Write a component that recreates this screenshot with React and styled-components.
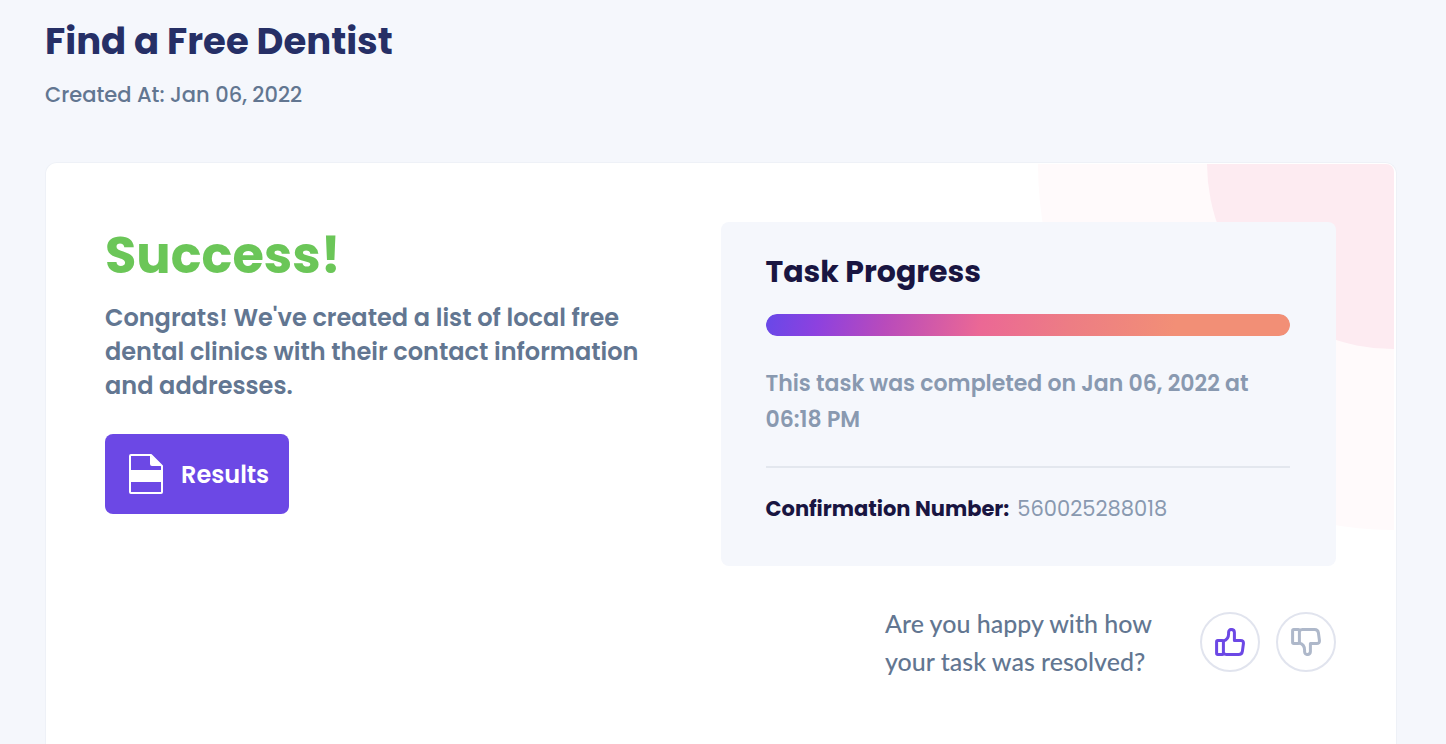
import { useState } from 'react'
import styled, { createGlobalStyle } from 'styled-components'

// styles
const GlobalStyle = createGlobalStyle`
  * {
    box-sizing: border-box;
  }
  body {
    margin: 0;
    background: #f5f7fc;
    font-family: Poppins, Inter, sans-serif;
    color: #627691;
  }
  h1, h2, h3, p, dl, dt, dd {
    margin: 0;
  }
`

const Page = styled.div`
  display: flex;
  flex-direction: column;
  min-height: 100vh;
  padding: 13px 49px 0 45px;
`

const Header = styled.header`
  padding-bottom: 52px;
`

const Title = styled.h1`
  font-size: 37px;
  line-height: 56px;
  font-weight: 700;
  color: #262f66;
`

const Created = styled.p`
  margin-top: 11px;
  font-size: 21px;
  line-height: 30px;
  font-weight: 500;
`

const Card = styled.main`
  position: relative;
  flex: 1;
  display: grid;
  grid-template-columns: 1fr 1fr;
  align-items: start;
  padding: 59px 60px 59px 59px;
  background: #fff;
  border: 1px solid #eef1f7;
  border-bottom: 0;
  border-radius: 12px 12px 0 0;
`

const Decoration = styled.svg`
  position: absolute;
  top: 1px;
  right: 2px;
  border-top-right-radius: 8px;
`

const Column = styled.section`
  position: relative;
`

const Status = styled.h2`
  font-size: 51px;
  line-height: 66px;
  font-weight: 700;
  color: #6bc658;
`

const Message = styled.p`
  max-width: 560px;
  margin: 13px 0 31px;
  font-size: 24px;
  line-height: 34px;
  font-weight: 600;
`

const ResultsButton = styled.button`
  display: flex;
  align-items: center;
  gap: 18px;
  height: 80px;
  padding: 0 20px 0 24px;
  border: 0;
  border-radius: 8px;
  background: #6c48e5;
  color: #fff;
  font-family: inherit;
  font-size: 24px;
  font-weight: 600;
  cursor: pointer;
`

const Panel = styled.div`
  padding: 28px 46px 41px 45px;
  border-radius: 8px;
  background: #f5f7fc;
`

const PanelTitle = styled.h3`
  font-size: 30px;
  line-height: 44px;
  font-weight: 700;
  color: #191541;
`

const Track = styled.div`
  height: 22px;
  margin: 20px 0 30px;
  border-radius: 11px;
  background: #e3e7f0;
  overflow: hidden;
`

const Bar = styled.div`
  height: 100%;
  border-radius: 11px;
  background: linear-gradient(100deg, #6848e8 0%, #8d41df 10%, #b94bbb 23%, #eb6895 41%, #ed7d84 58%, #f28f76 78%);
`

const Completed = styled.p`
  padding-bottom: 28px;
  border-bottom: 2px solid #e3e7ee;
  font-size: 22px;
  line-height: 36px;
  font-weight: 600;
  color: #8999b0;
`

const Confirmation = styled.dl`
  display: flex;
  flex-wrap: wrap;
  gap: 8px;
  margin-top: 25px;
  font-size: 21px;
  line-height: 32px;
  dt {
    font-weight: 700;
    color: #191541;
  }
  dd {
    color: #8999b0;
  }
`

const Feedback = styled.div`
  display: flex;
  align-items: flex-start;
  justify-content: flex-end;
  gap: 16px;
  margin-top: 38px;
`

const Question = styled.p`
  width: 299px;
  font-family: Lato, sans-serif;
  font-size: 25px;
  line-height: 38px;
  font-weight: 500;
`

const VoteButton = styled.button`
  display: flex;
  align-items: center;
  justify-content: center;
  width: 60px;
  height: 60px;
  margin-top: 8px;
  padding: 0;
  border: 2px solid #e1e4ee;
  border-radius: 50%;
  background: #fff;
  color: ${props => props.$active ? '#6c48e5' : '#aeb8ca'};
  cursor: pointer;
`

const FileIcon = () => (
  <svg width='34' height='40' viewBox='0 0 34 40' aria-hidden='true'>
    <path d='M2 1H22L33 12V38Q33 39 32 39H2Q1 39 1 38V2Q1 1 2 1Z' fill='none' stroke='#fff' strokeWidth='2' strokeLinejoin='round' />
    <path d='M21 1L33 12H23Q21 12 21 10ZM1 16H33V28H1Z' fill='#fff' />
  </svg>
)

const ThumbIcon = ({ down }) => (
  <svg width='30' height='28' viewBox='0 0 30 28' fill='none' stroke='currentColor' strokeWidth='3' strokeLinejoin='round' aria-hidden='true'>
    <g transform={down ? 'matrix(1 0 0 -1 0 28)' : undefined}>
      <path d='M2.8 12.5H7.2Q8.4 12.5 8.4 13.7V25.3Q8.4 26.5 7.2 26.5H2.8Q1.6 26.5 1.6 25.3V13.7Q1.6 12.5 2.8 12.5Z' />
      <path d='M8.4 13C11.5 12.2 13.6 9.5 13.6 5.8V4.2C13.6 0.4 19.4 0.6 19.4 4.4V12.5H25.6Q28.8 12.5 28.4 15.8L27.4 23.2Q26.9 26.5 23.6 26.5H11.4Q9.6 26.5 8.4 25.2' />
    </g>
  </svg>
)

const task = {
  title: 'Find a Free Dentist',
  created: 'Jan 06, 2022',
  completed: 'Jan 06, 2022 at 06:18 PM',
  confirmation: '560025288018',
  progress: 100
}

function App() {
  const [vote, setVote] = useState('up')
  return (
    <>
      <GlobalStyle />
      <Page>
        <Header>
          <Title>{task.title}</Title>
          <Created>{`Created At: ${task.created}`}</Created>
        </Header>
        <Card>
          <Decoration width='356' height='366' viewBox='0 0 356 366' aria-hidden='true'>
            <ellipse cx='355' cy='0' rx='355' ry='366' fill='#fffafb' />
            <circle cx='355' cy='-1' r='186' fill='#fdebf1' />
          </Decoration>
          <Column>
            <Status>Success!</Status>
            <Message>Congrats! We've created a list of local free dental clinics with their contact information and addresses.</Message>
            <ResultsButton type='button'>
              <FileIcon />
              Results
            </ResultsButton>
          </Column>
          <Column>
            <Panel>
              <PanelTitle id='progress-title'>Task Progress</PanelTitle>
              <Track role='progressbar' aria-labelledby='progress-title' aria-valuenow={task.progress}>
                <Bar style={{ width: `${task.progress}%` }} />
              </Track>
              <Completed>{`This task was completed on ${task.completed}`}</Completed>
              <Confirmation>
                <dt>Confirmation Number:</dt>
                <dd>{task.confirmation}</dd>
              </Confirmation>
            </Panel>
            <Feedback>
              <Question>Are you happy with how your task was resolved?</Question>
              <VoteButton type='button' aria-label='Yes' $active={vote === 'up'} onClick={() => setVote('up')}>
                <ThumbIcon />
              </VoteButton>
              <VoteButton type='button' aria-label='No' $active={vote === 'down'} onClick={() => setVote('down')}>
                <ThumbIcon down />
              </VoteButton>
            </Feedback>
          </Column>
        </Card>
      </Page>
    </>
  )
}

export default App
